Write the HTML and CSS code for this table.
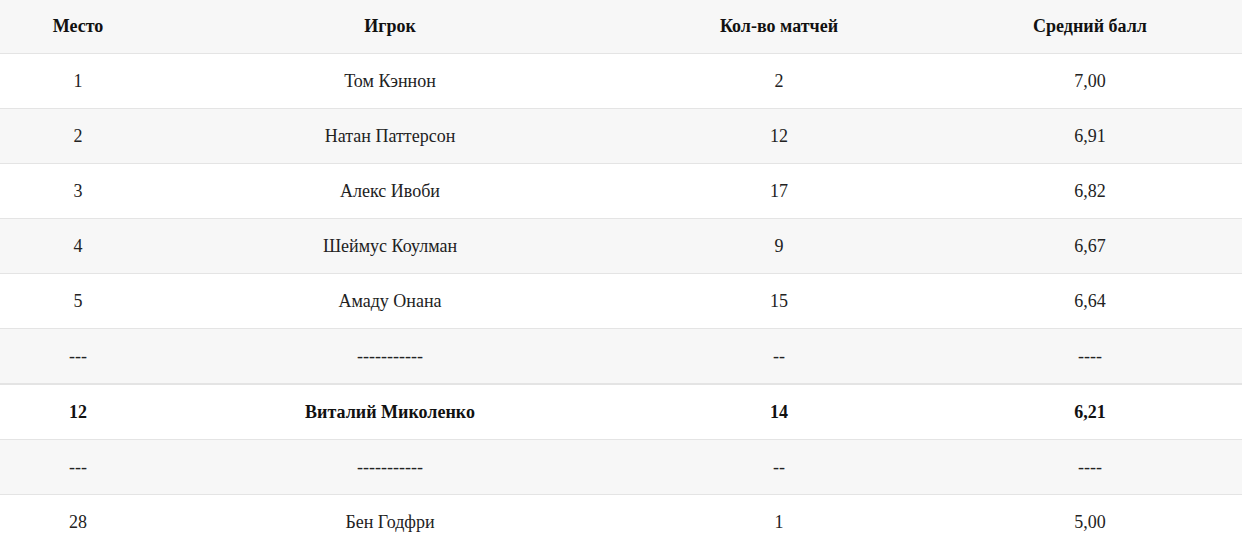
FILE: index.html
```html
<!DOCTYPE html>
<html lang="ru">
<head>
<meta charset="utf-8">
<title>Рейтинг игроков</title>
<link rel="stylesheet" href="styles.css">
</head>
<body>
<table class="ratings">
  <colgroup>
    <col class="c-place">
    <col class="c-player">
    <col class="c-games">
    <col class="c-avg">
  </colgroup>
  <thead>
    <tr><th>Место</th><th>Игрок</th><th>Кол-во матчей</th><th>Средний балл</th></tr>
  </thead>
  <tbody>
    <tr><td>1</td><td>Том Кэннон</td><td>2</td><td>7,00</td></tr>
    <tr><td>2</td><td>Натан Паттерсон</td><td>12</td><td>6,91</td></tr>
    <tr><td>3</td><td>Алекс Ивоби</td><td>17</td><td>6,82</td></tr>
    <tr><td>4</td><td>Шеймус Коулман</td><td>9</td><td>6,67</td></tr>
    <tr><td>5</td><td>Амаду Онана</td><td>15</td><td>6,64</td></tr>
    <tr class="gap before-hl"><td>---</td><td>-----------</td><td>--</td><td>----</td></tr>
    <tr class="hl"><td>12</td><td>Виталий Миколенко</td><td>14</td><td>6,21</td></tr>
    <tr class="gap"><td>---</td><td>-----------</td><td>--</td><td>----</td></tr>
    <tr><td>28</td><td>Бен Годфри</td><td>1</td><td>5,00</td></tr>
  </tbody>
</table>
</body>
</html>
```

FILE: styles.css
```css
html, body {
  margin: 0;
  padding: 0;
  background: #ffffff;
}

body {
  font-family: "Liberation Serif", "Times New Roman", serif;
  font-size: 18px;
  color: #222222;
}

.ratings {
  width: 1242px;
  border-collapse: separate;
  border-spacing: 0;
  table-layout: fixed;
}

.c-place { width: 156px; }
.c-player { width: 468px; }
.c-games { width: 310px; }
.c-avg { width: 308px; }

.ratings th,
.ratings td {
  padding: 0;
  text-align: center;
  vertical-align: middle;
  border-bottom: 1px solid #e4e4e4;
}

.ratings th:last-child,
.ratings td:last-child {
  padding-left: 4px;
}

.ratings th {
  height: 53px;
  font-weight: bold;
  color: #111111;
  background: #f7f7f7;
}

.ratings td {
  height: 54px;
}

.ratings tbody tr:nth-child(even) td {
  background: #f7f7f7;
}

.ratings tbody tr:last-child td {
  border-bottom: none;
}

.ratings tr.before-hl td {
  border-bottom: 2px solid #e4e4e4;
}

.ratings tr.hl td {
  font-weight: bold;
  color: #111111;
}
```
